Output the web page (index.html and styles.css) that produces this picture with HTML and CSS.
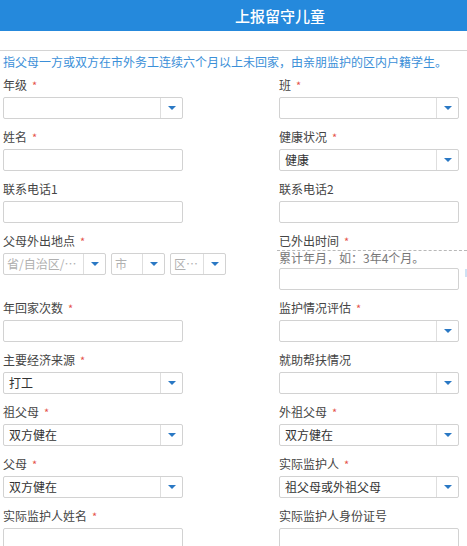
FILE: index.html
```html
<!DOCTYPE html>
<html lang="zh-CN">
<head>
<meta charset="utf-8">
<title>上报留守儿童</title>
<link rel="stylesheet" href="styles.css">
</head>
<body>
<header class="topbar"><h1 class="title">上报留守儿童</h1></header>
<p class="intro">指父母一方或双方在市外务工连续六个月以上未回家，由亲朋监护的区内户籍学生。</p>
<div class="form-grid">
  <div class="field">
    <div class="label">年级<span class="req">*</span></div>
    <div class="select"><span class="val"></span><span class="btn"><i class="arrow"></i></span></div>
  </div>
  <div class="field">
    <div class="label">班<span class="req">*</span></div>
    <div class="select"><span class="val"></span><span class="btn"><i class="arrow"></i></span></div>
  </div>

  <div class="field">
    <div class="label">姓名<span class="req">*</span></div>
    <div class="input"></div>
  </div>
  <div class="field">
    <div class="label">健康状况<span class="req">*</span></div>
    <div class="select"><span class="val">健康</span><span class="btn"><i class="arrow"></i></span></div>
  </div>

  <div class="field">
    <div class="label">联系电话1</div>
    <div class="input"></div>
  </div>
  <div class="field">
    <div class="label">联系电话2</div>
    <div class="input"></div>
  </div>

  <div class="field">
    <div class="label">父母外出地点<span class="req">*</span></div>
    <div class="region">
      <div class="select sel-prov"><span class="val ph">省/自治区/⋯</span><span class="btn"><i class="arrow"></i></span></div>
      <div class="select sel-city"><span class="val ph">市</span><span class="btn"><i class="arrow"></i></span></div>
      <div class="select sel-dist"><span class="val ph">区⋯</span><span class="btn"><i class="arrow"></i></span></div>
    </div>
  </div>
  <div class="field">
    <div class="label">已外出时间<span class="req">*</span></div>
    <div class="help">累计年月，如：3年4个月。</div>
    <div class="input-row"><div class="input"></div><span class="tip-edge"></span></div>
  </div>

  <div class="field">
    <div class="label">年回家次数<span class="req">*</span></div>
    <div class="input"></div>
  </div>
  <div class="field">
    <div class="label">监护情况评估<span class="req">*</span></div>
    <div class="select"><span class="val"></span><span class="btn"><i class="arrow"></i></span></div>
  </div>

  <div class="field">
    <div class="label">主要经济来源<span class="req">*</span></div>
    <div class="select"><span class="val">打工</span><span class="btn"><i class="arrow"></i></span></div>
  </div>
  <div class="field">
    <div class="label">就助帮扶情况</div>
    <div class="select"><span class="val"></span><span class="btn"><i class="arrow"></i></span></div>
  </div>

  <div class="field">
    <div class="label">祖父母<span class="req">*</span></div>
    <div class="select"><span class="val">双方健在</span><span class="btn"><i class="arrow"></i></span></div>
  </div>
  <div class="field">
    <div class="label">外祖父母<span class="req">*</span></div>
    <div class="select"><span class="val">双方健在</span><span class="btn"><i class="arrow"></i></span></div>
  </div>

  <div class="field">
    <div class="label">父母<span class="req">*</span></div>
    <div class="select"><span class="val">双方健在</span><span class="btn"><i class="arrow"></i></span></div>
  </div>
  <div class="field">
    <div class="label">实际监护人<span class="req">*</span></div>
    <div class="select"><span class="val">祖父母或外祖父母</span><span class="btn"><i class="arrow"></i></span></div>
  </div>

  <div class="field">
    <div class="label">实际监护人姓名<span class="req">*</span></div>
    <div class="input"></div>
  </div>
  <div class="field">
    <div class="label">实际监护人身份证号</div>
    <div class="input"></div>
  </div>
</div>
</body>
</html>
```

FILE: styles.css
```css
html, body {
  margin: 0;
  padding: 0;
  background: #ffffff;
  overflow: hidden;
}
body {
  font-family: "Noto Sans CJK SC", "Microsoft YaHei", "Noto Sans", sans-serif;
  font-size: 12px;
  color: #444;
}
.topbar {
  height: 31px;
  background: #2589dc;
  display: flex;
  align-items: center;
  justify-content: center;
  padding-left: 93px;
}
.title {
  margin: 0;
  font-size: 15px;
  font-weight: 500;
  color: #ffffff;
  line-height: 31px;
}
.intro {
  margin: 19px 0 0 0;
  border-top: 1px solid #d4d4d4;
  padding: 2px 0 0 3px;
  line-height: 17px;
  font-size: 12px;
  color: #3b8fd8;
  white-space: nowrap;
}
.form-grid {
  margin-top: 6px;
  padding-left: 3px;
  display: grid;
  grid-template-columns: 276px 1fr;
  row-gap: 9px;
}
.field {
  display: flex;
  flex-direction: column;
  align-items: flex-start;
}
.label {
  height: 18px;
  line-height: 18px;
  margin-bottom: 3px;
  color: #454545;
  white-space: nowrap;
}
.req {
  color: #e5534b;
  margin-left: 5px;
  font-size: 11px;
}
.input, .select {
  box-sizing: border-box;
  width: 180px;
  height: 22px;
  border: 1px solid #d2d2d2;
  border-radius: 2px;
  background: #fff;
}
.select {
  display: flex;
  align-items: stretch;
}
.val {
  flex: 1;
  min-width: 0;
  padding-left: 5px;
  line-height: 20px;
  color: #333;
  white-space: nowrap;
  overflow: hidden;
}
.val.ph {
  color: #b0b0b0;
  padding-left: 3px;
}
.btn {
  width: 21px;
  border-left: 1px solid #dedede;
  display: flex;
  align-items: center;
  justify-content: center;
}
.arrow {
  display: block;
  width: 0;
  height: 0;
  border-left: 4px solid transparent;
  border-right: 4px solid transparent;
  border-top: 4px solid #2a78c4;
}
.region {
  display: flex;
  gap: 5px;
}
.sel-prov { width: 103px; }
.sel-city { width: 54px; }
.sel-dist { width: 56px; }
.help {
  align-self: stretch;
  margin-left: -2px;
  padding-left: 2px;
  border-top: 1px dashed #b8b8b8;
  height: 14px;
  line-height: 14px;
  margin-top: -3px;
  margin-bottom: 3px;
  color: #777;
  white-space: nowrap;
}
.input-row {
  display: flex;
  align-items: flex-start;
}
.tip-edge {
  width: 2px;
  height: 8px;
  margin-left: 6px;
  margin-top: 1px;
  background: #cfe2f4;
}
```
